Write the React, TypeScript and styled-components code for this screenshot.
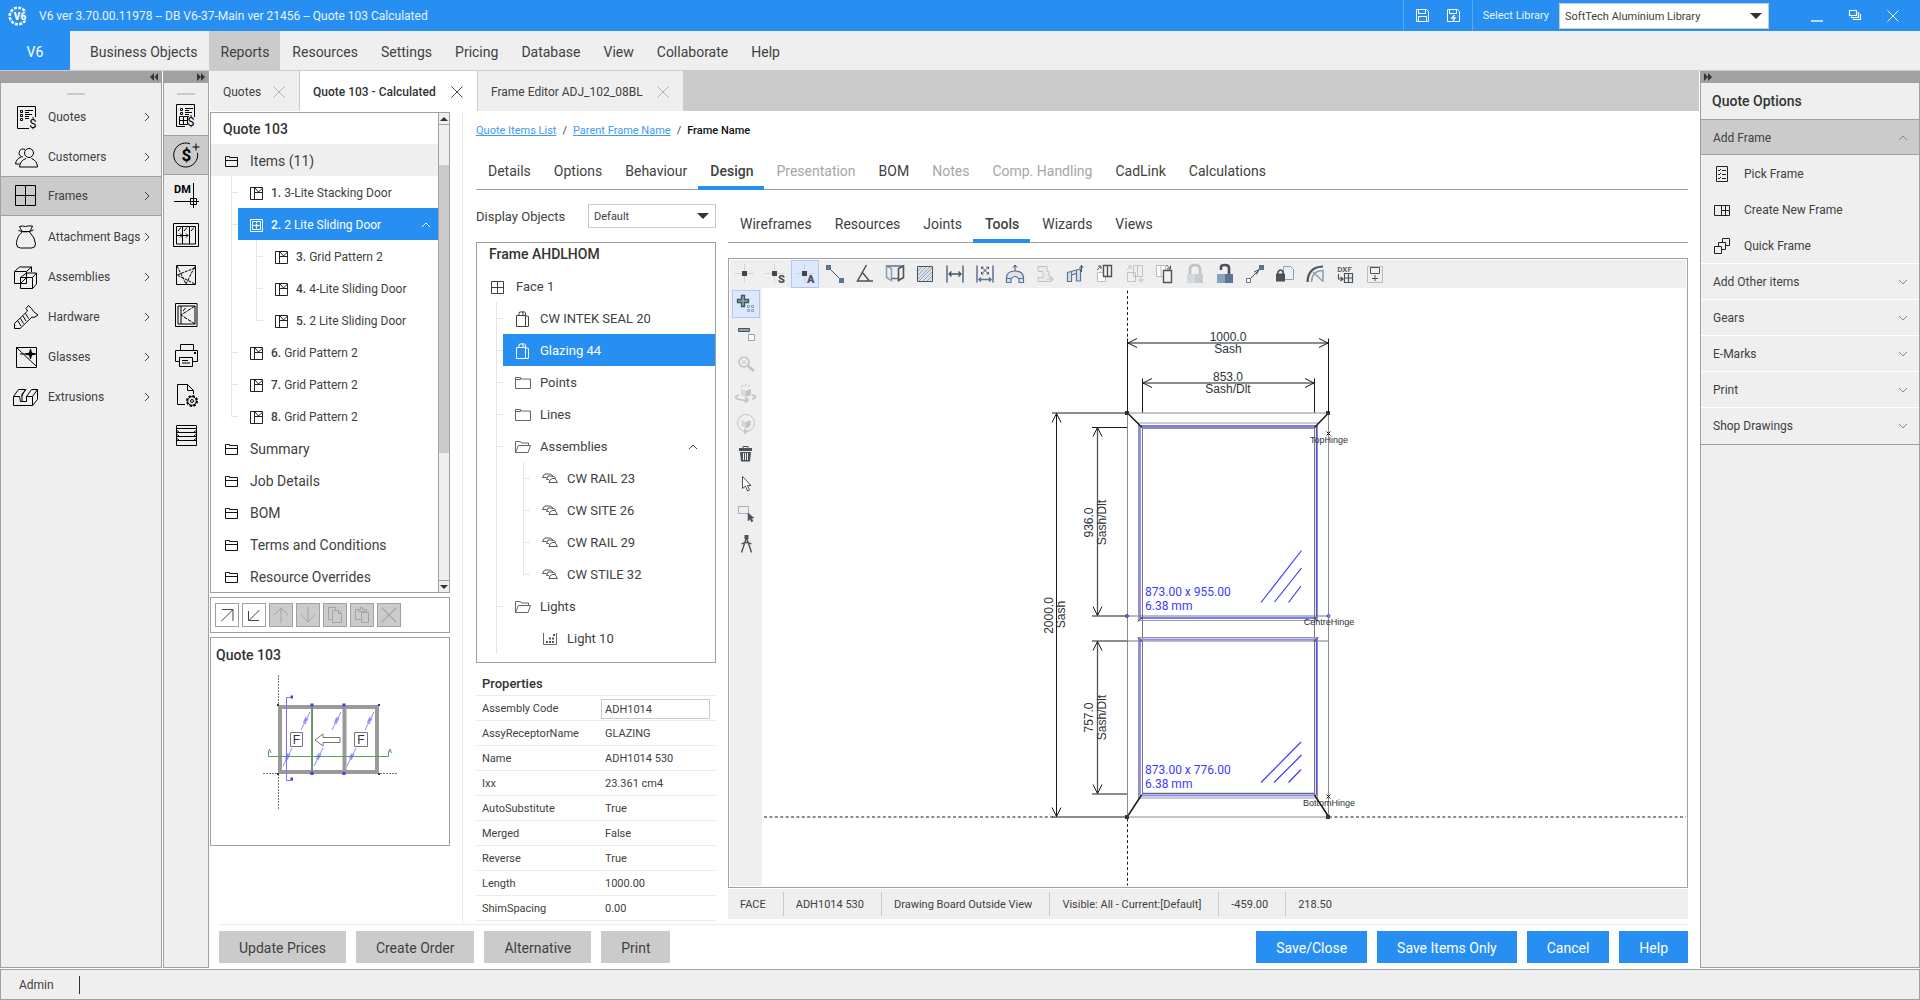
import React from "react";
import styled, { createGlobalStyle, css } from "styled-components";

const c = {
  blue: "#278ff1",
  bar: "#efefef",
  mid: "#cbcbcb",
  line: "#a1a1a1",
  soft: "#ececec",
  text: "#414141",
  dim: "#a6a6a6",
  slate: "#4a525c",
  steel: "#5b7495",
  mist: "#8ba3b8",
};

const Global = createGlobalStyle`
  *, *::before, *::after { box-sizing: border-box; }
  html, body, #root { height: 100%; }
  body {
    margin: 0;
    background: #fff;
    color: ${c.text};
    font-family: Roboto, "Noto Sans", sans-serif;
    font-size: 12px;
    line-height: 16px;
  }
  button, input, select { font: inherit; color: inherit; }
  button { border: 0; padding: 0; background: none; text-align: left; }
  ul { list-style: none; margin: 0; padding: 0; }
  h2, h3 { margin: 0; font-size: 14px; font-weight: 500; color: #333; }
  svg { display: block; flex: none; }
`;

const Shell = styled.div`
  display: flex;
  flex-direction: column;
  min-height: 100vh;
  min-width: 1500px;
`;

/* ---------- icons ---------- */

const Glyph = styled.svg<{ $size?: number }>`
  width: ${(p) => p.$size ?? 24}px;
  height: ${(p) => p.$size ?? 24}px;
  fill: none;
  stroke: currentColor;
  overflow: visible;
  text {
    stroke: none;
    fill: currentColor;
    font-family: Roboto, sans-serif;
  }
`;

const G = ({ size = 24, box, children }: { size?: number; box?: number; children: React.ReactNode }) => (
  <Glyph $size={size} viewBox={`0 0 ${box ?? size} ${box ?? size}`} aria-hidden="true">
    {children}
  </Glyph>
);

const Cross = ({ size = 12 }: { size?: number }) => (
  <G size={size} box={12}>
    <path d="M.5.5l11 11M11.5.5l-11 11" strokeWidth=".9" />
  </G>
);
const Chev = ({ dir }: { dir: "up" | "down" | "right" }) => (
  <G size={8}>
    <path
      d={dir === "up" ? "M0 6l4-4 4 4" : dir === "down" ? "M0 2l4 4 4-4" : "M2 0l4 4-4 4"}
      strokeWidth="1"
    />
  </G>
);
const Twin = ({ left }: { left?: boolean }) => (
  <G size={8}>
    <path fill="#333" stroke="none" d={left ? "M4 0v8L0 4zM8 0v8L4.5 4z" : "M0 0v8l4-4zM4 0v8l4-4z"} />
  </G>
);
const Caret = () => (
  <svg width={12} height={6} viewBox="0 0 12 6" aria-hidden="true">
    <path d="M0 0h12L6 6z" fill="#333" />
  </svg>
);
const Folder = () => (
  <G size={13}>
    <path stroke="#111" d="M.5 11.5v-10h4v1h8v9zM.5 5.5h12" />
  </G>
);
const FolderWide = ({ open }: { open?: boolean }) => (
  <G size={16}>
    <path
      stroke="#666"
      d={open ? "M.5 13.5v-11h5l1 1.5h7v2.5M.5 13.5l3-7h12l-2.5 7z" : "M.5 2.5h5V4h10v9.500H.5zM.5 4.500h5"}
    />
  </G>
);
const Grid4 = () => (
  <G size={13}>
    <path d="M.5.5h12v12H.5zM6.5.5v12M.5 6.5h12" />
  </G>
);
const DoorIcon = () => (
  <G size={13}>
    <path stroke="#222" d="M.5.5h12v12H.5zM4.5.5v12M4.5 5.5h8M5 1l3.5 4L12.5 1" />
  </G>
);
const LiteIcon = () => (
  <G size={13}>
    <path d="M.5.5h12v12H.5zM2.5 2.5h8v8h-8z" />
    <path d="M6.5 3v7M3 6.5h7" strokeDasharray="1.5 1" />
    <circle cx="6.5" cy="6.5" r="1" />
  </G>
);
const BagIcon = () => (
  <G size={16}>
    <path d="M1.500 4.500h9v11h-9zM10.500 4.500l3 1v10h-3M4 4.500V1.500q2-1.500 4 0v3M7 1q3-1 3.500 1v2.500" />
  </G>
);
const RailIcon = () => (
  <G size={16}>
    <path
      stroke="#555"
      d="M.5 6.500l2-3.500h6l2 2v1M.5 6.500h4M4.500 8.500l1.500-3.500h5l3 2M4.500 8.500H7M7 11.500l1-2.500 2-1.500h3l2.500 4z"
    />
  </G>
);
const LightIcon = () => (
  <G size={16}>
    <path d="M1.500 2v11.500h13V2" stroke="#666" />
    <path
      d="M4 10h2v2H4zM7 10h2v2H7zM10 10h2v2h-2zM7 6.500h2v2H7zM10 6.500h2v2h-2zM11 3h2v2h-2z"
      fill="#555"
      stroke="none"
    />
  </G>
);

const Dollar = ({ x, y, s = 12 }: { x: number; y: number; s?: number }) => (
  <text x={x} y={y} fontSize={s} textAnchor="middle">
    $
  </text>
);

const ListLines = () => (
  <path d="M6.500 5.500h2v2h-2zM6.500 9.500h2v2h-2zM6.500 13.500h2v2h-2zM11 5.500h8M11 7.500h4M11 9.500h7M11 11.500h4M11 13.500h4" />
);

const nav: [string, React.ReactNode][] = [
  ["Quotes", <><path d="M15 23.500H3.500v-22h18V12" /><ListLines /><Dollar x={19} y={23} s={13} /></>],
  ["Customers", <><circle cx="15" cy="8" r="4.500" /><path d="M12 13.500q-6 2-6.500 8.500h18q-.5-6.500-6-8.500M11 4.500a4 4 0 1 0-2 7.500M5.500 19H1.500q.5-5 5.500-7" /></>],
  ["Frames", <path d="M1.500 1.500h20v20h-20zM11.500 1.500v20M1.500 11.500h20" />],
  ["Attachment Bags", <path d="M8.500 6.500C6 4 6 2 5.500 1.500q3-1 6 0 3-1 7-.5-1 3-3 5.500zM4.500 5.500q8 3 15-.5M8.500 7C4 10 2.500 15 2.500 19q0 4 4 4h11q4 0 4-4 0-6-6-12" />],
  ["Assemblies", <path d="M.5 6.500h12v12H.5zM.5 6.500l5-4.500h12v5M12.500 6.500l5-4.500M6.500 12.500h12v11h-12zM18.500 12.500l4-4.500v11l-4 4.500M12.500 8h10M6.500 12.500l6-4.500M7 18l5-5" />],
  ["Hardware", <path d="M.5 18.500L13.500 6 12 3.500 14.500.5l3 3 2 3 4.500 3.500-4 2.500-2-.5L6 23.500H.5zM4 16l3 5M6.500 13.500l3 5M9 11l3 5M11.500 8.500l3 5" />],
  ["Glasses", <><path d="M2.500 2.500h20v20h-20zM2.500 2.500l20 19" /><path d="M16.500 4l1 4 4 1-4 1-1 4-1-4-4-1 4-1z" fill="currentColor" /><path d="M6 9h16" /></>],
  ["Extrusions", <path d="M-.5 11.500h6l1 5h6v-5h6v9H-.500zM-.5 11.500l5-7h7l-4 7M18.500 20.500l5-6v-10h-6l-5 7M18.500 11.500l5-7M8 16V9l4-4.500" />],
];

const quick: [string, React.ReactNode][] = [
  ["Quote pricing", <><path d="M11 23.500H2.500v-22h18V14" /><ListLines /><path d="M5.500 13.500h8v8h-8zM9.500 13.500v8M5.500 17.500h8" fill="#efefef" /><Dollar x={17} y={23} s={13} /></>],
  ["Add price", <><path d="M16 .8a12 12 0 1 0 7.500 9M22 .500v7M18.500 4h7" /><text x="12.500" y="18" fontSize="17" fontWeight="700" textAnchor="middle">$</text></>],
  ["Drawing manager", <><text x="0" y="10" fontSize="11" fontWeight="700">DM</text><path d="M0 18.500h25M19.500 0v25M16.500 15.500h6v6h-6z" /></>],
  ["Sashes", <path d="M-.5.5h25v23h-25zM2.500 3.500h19v17.500h-19zM8.500 3.500V21M15.500 3.500V21M4 8l3-3.500M10 8l3-3.500M17 8l3-3.500M3 12.500h5m-2-2l2 2-2 2M9 12.500h5m-2-2l2 2-2 2" />],
  ["Openings", <><path d="M2.500 2.500h19v19h-19z" /><path d="M3 3l9 18 9-18M21 5L3 12l18 9" strokeDasharray="3 1" /></>],
  ["Hinged window", <><path d="M1.500.5h21.500v23h-21.500zM4 3h17v18H4zM7 3v18" /><path d="M21 3L7 12l14 9M9 8l3-3.500" strokeDasharray="4 1" /></>],
  ["Printer", <><path d="M6.500 7V1.500h13V7M5 18.500H1.500v-11h22v11H18M5.500 14.500h13v9h-13zM8 17.500h6M8 20h8" /><path d="M20 10h2" strokeWidth="2" /></>],
  ["Document settings", <><path d="M11 21.500H3.500v-20h10l6 6V11M13.500 1.500v6h6" /><circle cx="18" cy="18" r="5" strokeWidth="2" strokeDasharray="2.300 1.600" /><circle cx="18" cy="18" r="4.300" /><circle cx="18" cy="18" r="1.500" /></>],
  ["Louvres", <path d="M2.500 2.500h20v20h-20zM2.500 5.500h20M2.500 9.500h20M2.500 13.500h20M2.500 17.500h20M2.500 7l3 2.500M2.500 11l3 2.500M2.500 15l3 2.500M22.500 7l-3 2.500M22.500 11l-3 2.500M22.500 15l-3 2.500" />],
];

/* ---------- title bar ---------- */

const TitleBar = styled.header`
  display: flex;
  align-items: center;
  height: 31px;
  padding: 0 20px 0 8px;
  background: ${c.blue};
  color: #fff;
  font-size: 12px;
`;
const TitleText = styled.span`
  flex: 1;
  padding-left: 11px;
  white-space: nowrap;
  color: #e9f4ff;
`;
const TitleSaves = styled.div`
  display: flex;
  align-items: center;
  justify-content: center;
  gap: 18px;
  width: 70px;
  height: 31px;
  border: solid #5aaaf5;
  border-width: 0 1px;
`;
const IconButton = styled.button`
  display: flex;
`;
const SelectLabel = styled.label`
  padding: 1px 10px 0;
  font-size: 11px;
  color: #e9f4ff;
`;
const PickWrap = styled.div<{ $w: number; $h: number }>`
  display: grid;
  align-items: center;
  width: ${(p) => p.$w}px;
  height: ${(p) => p.$h}px;
  > * {
    grid-area: 1 / 1;
  }
  > svg {
    justify-self: end;
    margin-right: 7px;
    pointer-events: none;
  }
`;
const Pick = styled.select`
  width: 100%;
  height: 100%;
  padding: 2px 5px 0;
  appearance: none;
  border: 1px solid ${c.mid};
  border-radius: 0;
  background: #fff;
  color: ${c.text};
  font-size: 11px;
`;
const WindowButtons = styled.div`
  display: flex;
  align-items: center;
  gap: 25px;
  margin-left: 42px;
  button {
    width: 13px;
  }
`;

const Floppy = ({ bolt }: { bolt?: boolean }) => (
  <G size={13}>
    <path d="M.5.5h10l2 2v10H.5zM2.500.5v4h7v-4" />
    {bolt ? <path d="M7.500 6L5 9h3l-2 3" strokeWidth="1.300" /> : <path d="M2.500 12V7.500h8V12" />}
  </G>
);

const Logo = () => (
  <svg width="20" height="20" viewBox="0 0 20 20" aria-hidden="true">
    <circle cx="10" cy="10" r="8.300" fill="none" stroke="#fff" strokeWidth="2.600" strokeDasharray="3 1.340" />
    <rect x="5" y="6" width="15" height="8.500" fill={c.blue} />
    <text x="12" y="13.500" fontSize="10" fontWeight="900" textAnchor="middle" fill="#fff" fontFamily="Roboto, sans-serif">
      V6
    </text>
  </svg>
);

/* ---------- menu ---------- */

const MenuBar = styled.nav`
  display: flex;
  height: 40px;
  background: ${c.bar};
  border-bottom: 1px solid ${c.mid};
  font-size: 14px;
`;
const Brand = styled.button`
  width: 70px;
  margin-right: 8px;
  padding-top: 2px;
  background: ${c.blue};
  color: #fff;
  text-align: center;
`;
const MenuItem = styled.button<{ $on?: boolean }>`
  padding: 2px 11px 0 12px;
  background: ${(p) => (p.$on ? c.mid : "transparent")};
`;

/* ---------- side rails ---------- */

const Body = styled.div`
  display: flex;
  flex: 1;
  gap: 1px;
  padding-bottom: 1px;
`;
const Rail = styled.aside<{ $w: number }>`
  flex: none;
  width: ${(p) => p.$w}px;
  background: ${c.bar};
  border: 1px solid ${c.line};
  border-top: 0;
`;
const RailHead = styled.div<{ $end?: boolean }>`
  display: flex;
  align-items: center;
  justify-content: ${(p) => (p.$end ? "flex-end" : "flex-start")};
  height: 12px;
  padding: 0 3px;
  background: ${c.line};
`;
const Grip = styled.div<{ $pad?: number }>`
  height: 12px;
  padding-right: ${(p) => p.$pad ?? 0}px;
  &::before {
    content: "";
    display: block;
    width: 18px;
    height: 12px;
    margin: auto;
    border-bottom: 2px solid ${c.mid};
  }
`;
const railRow = css<{ $on?: boolean }>`
  display: flex;
  align-items: center;
  width: 100%;
  height: 40px;
  border: solid transparent;
  border-width: 1px 0;
  ${(p) => p.$on && `background: ${c.mid}; border-color: ${c.line};`}
`;
const NavItem = styled.button<{ $on?: boolean }>`
  ${railRow}
  padding: 0 10px 0 13px;
  ${(p) => p.$on && "margin: -1px 0 1px;"}
  svg:first-child {
    color: #000;
  }
  span {
    flex: 1;
    padding-left: 10px;
    white-space: nowrap;
  }
`;
const NavList = styled.div<{ $gap: number }>`
  padding-top: ${(p) => p.$gap}px;
`;
const QuickItem = styled.button<{ $on?: boolean }>`
  ${railRow}
  justify-content: center;
  color: #000;
`;

/* ---------- main ---------- */

const Main = styled.main`
  display: flex;
  flex: 1;
  flex-direction: column;
  min-width: 0;
`;
const DocTabs = styled.div`
  display: flex;
  height: 40px;
  background: ${c.mid};
`;
const DocTab = styled.div<{ $on?: boolean; $w: number }>`
  display: flex;
  align-items: center;
  justify-content: space-between;
  width: ${(p) => p.$w}px;
  padding: 2px 14px 0 13px;
  border-right: 1px solid ${c.mid};
  background: ${(p) => (p.$on ? "#fff" : c.bar)};
  font-weight: ${(p) => (p.$on ? 500 : 400)};
  color: ${(p) => (p.$on ? "#333" : c.text)};
  white-space: nowrap;
  ${IconButton} {
    color: ${(p) => (p.$on ? "#333" : "#aaa")};
  }
`;
const Work = styled.div`
  display: flex;
  flex: 1;
  padding-top: 1px;
`;
const LeftCol = styled.section`
  display: flex;
  flex: none;
  flex-direction: column;
  gap: 4px;
  width: 252px;
  padding-right: 12px;
`;
const Box = styled.div`
  border: 1px solid ${c.line};
`;
const ListBox = styled(Box)`
  --step: 20px;
  --step-in: 18px;
  --end: 8px;
  display: flex;
  ul {
    flex: 1;
  }
`;
const PanelTitle = styled.h2`
  padding: 8px 12px 7px;
`;
const Bar = styled.div`
  display: flex;
  flex-direction: column;
  width: 11px;
  border-left: 1px solid ${c.line};
  background: ${c.bar};
`;
const BarButton = styled.button`
  display: flex;
  align-items: center;
  justify-content: center;
  height: 12px;
  background: ${c.bar};
  border: solid ${c.line};
  border-width: 0 0 1px;
  &:last-child {
    border-width: 1px 0 0;
  }
`;
const Thumb = styled.div`
  flex: 288;
  background: ${c.mid};
`;
const Track = styled.div<{ $n: number }>`
  flex: ${(p) => p.$n};
`;

type Guide = "line" | "tick" | "last" | "none";
const TreeRow = styled.li<{ $shade?: boolean }>`
  display: flex;
  height: 32px;
  background: ${(p) => (p.$shade ? c.bar : "transparent")};
`;
const GuideCell = styled.span<{ $kind: Guide }>`
  width: 7px;
  margin-left: var(--step);
  background-repeat: no-repeat;
  background-image: ${(p) => (p.$kind === "none" ? "none" : "linear-gradient(#e6e6e6, #e6e6e6), linear-gradient(#e6e6e6, #e6e6e6)")};
  background-position: 0 0, 0 50%;
  background-size: 1px ${(p) => (p.$kind === "last" ? "50%" : "100%")},
    ${(p) => (p.$kind === "line" ? "0" : "100%")} 1px;
  & + & {
    margin-left: var(--step-in);
  }
`;
const TreeButton = styled.button<{ $on?: boolean; $gap: number; $size: number; $root: boolean }>`
  display: flex;
  flex: 1;
  align-items: center;
  gap: ${(p) => p.$gap}px;
  padding: 2px var(--end) 0 ${(p) => (p.$root ? 14 : 12)}px;
  font-size: ${(p) => p.$size}px;
  color: ${(p) => (p.$on ? "#fff" : c.text)};
  background: ${(p) => (p.$on ? c.blue : "transparent")};
  white-space: nowrap;
  b {
    font-weight: 500;
  }
  span {
    flex: 1;
  }
`;
type TreeProps = {
  icon: React.ReactNode;
  label: string;
  no?: number;
  guides?: Guide[];
  on?: boolean;
  shade?: boolean;
  open?: boolean;
  gap?: number;
  size?: number;
};
const Tree = ({ icon, label, no, guides = [], on, shade, open, gap = 12, size = 14 }: TreeProps) => (
  <TreeRow $shade={shade}>
    {guides.map((g, i) => (
      <GuideCell key={i} $kind={g} />
    ))}
    <TreeButton type="button" $on={on} $gap={gap} $size={size} $root={guides.length === 0}>
      {icon}
      <span>
        {no && <b>{no}.</b>} {label}
      </span>
      {open && <Chev dir="up" />}
    </TreeButton>
  </TreeRow>
);

const MiniBar = styled(Box)`
  display: flex;
  gap: 3px;
  padding: 5px 4px;
`;
const MiniButton = styled.button`
  display: flex;
  align-items: center;
  justify-content: center;
  width: 24px;
  height: 24px;
  border: 1px solid ${c.line};
  color: #444;
  &:disabled {
    background: ${c.mid};
    color: #a3a3a3;
  }
`;
const Preview = styled(Box)`
  h3 {
    padding: 9px 5px 7px;
  }
  svg {
    width: 100%;
    height: 175px;
  }
`;

const Editor = styled.section`
  display: flex;
  flex: 1;
  flex-direction: column;
  min-width: 0;
  padding: 0 11px 0 13px;
  border-left: 1px solid ${c.soft};
`;
const Crumbs = styled.nav`
  display: flex;
  gap: 6px;
  height: 38px;
  align-items: center;
  font-size: 11px;
  a {
    color: #3d9bf3;
  }
  b {
    font-weight: 500;
    color: #111;
  }
`;
const TabRow = styled.div<{ $h: number }>`
  display: flex;
  height: ${(p) => p.$h}px;
  border-bottom: 1px solid ${c.line};
`;
const Tab = styled.button<{ $on?: boolean }>`
  height: 40px;
  padding: 5px 11px 0 12px;
  align-self: flex-end;
  margin-bottom: -1px;
  font-size: 14px;
  white-space: nowrap;
  border-bottom: 4px solid ${(p) => (p.$on ? c.blue : "transparent")};
  font-weight: ${(p) => (p.$on ? 500 : 400)};
  &:disabled {
    color: ${c.dim};
  }
`;
const Columns = styled.div`
  display: flex;
  flex: 1;
  gap: 12px;
`;
const FrameCol = styled.div`
  flex: none;
  width: 240px;
`;
const ObjectsRow = styled.div`
  display: flex;
  align-items: center;
  justify-content: space-between;
  height: 52px;
  font-size: 13px;
  label {
    padding-top: 2px;
  }
`;
const FrameBox = styled(Box)`
  --step: 19px;
  --step-in: 20px;
  --end: 18px;
  padding-bottom: 8px;
  h3 {
    padding: 3px 12px 8px;
  }
`;
const PropTitle = styled.h3`
  padding: 13px 6px 3px;
  font-size: 13px;
`;
const PropTable = styled.table`
  width: 100%;
  border-collapse: collapse;
  table-layout: fixed;
  font-size: 11px;
  tr {
    height: 25px;
    border-top: 1px solid ${c.soft};
    border-bottom: 1px solid ${c.soft};
  }
  th {
    width: 125px;
    padding: 1px 6px 0;
    font-weight: 400;
    text-align: left;
  }
  td {
    padding: 1px 6px 0 4px;
  }
`;
const CodeInput = styled.input`
  display: block;
  width: 109px;
  height: 20px;
  margin-left: -4px;
  padding: 1px 3px 0;
  border: 1px solid ${c.mid};
`;

const DrawCol = styled.div`
  display: flex;
  flex: 1;
  flex-direction: column;
  min-width: 0;
`;
const Board = styled(Box)`
  display: grid;
  flex: 1;
  grid-template: 28px 1fr / 32px 1fr;
  margin-top: 15px;
  padding: 1px;
`;
const ToolBar = styled.div<{ $side?: boolean }>`
  display: flex;
  flex-direction: ${(p) => (p.$side ? "column" : "row")};
  grid-column: ${(p) => (p.$side ? "1" : "1 / 3")};
  gap: 2px;
  padding: ${(p) => (p.$side ? "2px" : "0 1px")};
  background: ${c.bar};
`;
const Tool = styled.button<{ $on?: boolean }>`
  flex: none;
  width: 28px;
  height: 28px;
  color: ${c.slate};
  box-shadow: ${(p) => (p.$on ? "inset 0 0 0 1px #b9c3f7" : "none")};
  background: ${(p) => (p.$on ? "#dce8fb" : "transparent")};
  &:disabled {
    opacity: 0.28;
  }
`;
const Sheet = styled.div`
  display: flex;
  min-height: 597px;
  svg {
    width: 100%;
    height: 100%;
  }
`;
const StateBar = styled.div`
  display: flex;
  align-items: center;
  height: 30px;
  margin-top: 1px;
  margin-bottom: 5px;
  background: ${c.bar};
  font-size: 11px;
  span {
    height: 24px;
    padding: 5px 17px 0 12px;
    border-right: 1px solid ${c.mid};
  }
  span:last-child {
    border: 0;
  }
`;
const Footer = styled.footer`
  display: flex;
  gap: 10px;
  margin: 0 11px 0 9px;
  padding: 6px 0 5px;
  border-top: 1px solid ${c.soft};
`;
const Action = styled.button<{ $main?: boolean }>`
  height: 32px;
  padding: 2px 20px 0;
  font-size: 14px;
  background: ${(p) => (p.$main ? c.blue : c.mid)};
  color: ${(p) => (p.$main ? "#fff" : c.text)};
`;
const Spacer = styled.span`
  flex: 1;
`;

/* ---------- options ---------- */

const OptionTitle = styled.h2`
  padding: 10px 11px;
  border-bottom: 1px solid ${c.line};
`;
const OptionHead = styled.button<{ $on?: boolean }>`
  display: flex;
  align-items: center;
  justify-content: space-between;
  width: 100%;
  height: 36px;
  padding: 1px 12px 0;
  border-top: 1px solid #fff;
  ${(p) => p.$on && `height: 35px; padding-top: 2px; background: ${c.mid}; border-top: 0; border-bottom: 1px solid ${c.line};`}
  svg {
    color: #888;
  }
`;
const OptionItem = styled.button`
  display: flex;
  align-items: center;
  gap: 14px;
  width: 100%;
  height: 36px;
  padding: 2px 13px 0;
  svg {
    color: #222;
  }
`;
const Options = styled.div`
  padding-bottom: 1px;
  border-bottom: 1px solid ${c.line};
`;
const AppStatus = styled.div`
  display: flex;
  align-items: center;
  height: 31px;
  padding-left: 18px;
  background: ${c.bar};
  border: 1px solid ${c.line};
  span {
    width: 61px;
    height: 18px;
    padding-top: 1px;
    border-right: 1px solid #333;
  }
`;

/* ---------- tool icons, drawn on a 28px button ---------- */

const Plus0 = () => (
  <>
    <path d="M4 13.500h19M13.500 4v19" stroke="#d4d4d4" />
    <path d="M11 11h5v5h-5z" fill="#3e4650" stroke="none" />
  </>
);
const Lock = ({ open }: { open?: boolean }) => (
  <>
    <path d={open ? "M10 10V7q0-2 4-2t4 3v6" : "M9 14V9q0-4 5-4t5 4v5"} strokeWidth="2.600" />
    <path d="M6 14h8v9H6z" fill={c.mist} stroke="none" />
    <path d="M14 14h8v9h-8z" fill={c.steel} stroke="none" />
  </>
);

const tools: [string, React.ReactNode, boolean?][] = [
  ["Point", <Plus0 />],
  ["Snap point", <><Plus0 /><text x="17" y="23" fontSize="11" fontWeight="900">S</text></>],
  ["Auto point", <><Plus0 /><text x="16" y="23" fontSize="11" fontWeight="900">A</text></>],
  ["Line", <><path d="M8 8l12 12" /><path d="M5 5h5v5H5zM18 18h5v5h-5z" fill={c.steel} stroke="none" /></>],
  ["Angle", <path d="M15.500 5L6.500 21H22M11 12l7 8.500" strokeWidth="1.500" />],
  ["Opening", <><path d="M5.500 6l5 2.500v12l-5-3z" stroke={c.mist} strokeWidth="1.600" /><path d="M5.500 6h17M10.500 18.500h7" stroke={c.steel} strokeWidth="1.400" /><path d="M22.500 6l-5 2.500v12l5-3z" strokeWidth="1.600" /></>],
  ["Hatch", <><path d="M6.500 6.500h15v15h-15z" fill="#dbe2e9" /><path d="M7 11l4-4M7 15l8-8M7 19L19 7M8 21L21 8M12 21l9-9M16 21l5-5" stroke={c.mist} strokeWidth=".9" /></>],
  ["Dimension", <><path d="M6 5.500v17M22 5.500v17" stroke={c.steel} strokeWidth="1.600" /><path d="M8 14h12M10.500 11.500L8 14l2.500 2.500M17.500 11.500L20 14l-2.500 2.500" strokeWidth="1.300" /></>],
  ["Fit dimension", <><path d="M6 5.500v17M22 5.500v17M8 19.500h12M10 17.500l-2 2 2 2M18 17.500l2 2-2 2" stroke={c.steel} strokeWidth="1.500" /><path d="M10.500 7l7 7M17.500 7l-7 7M10.500 9V7h2M15.500 7h2v2M10.500 12v2h2M15.500 14h2v-2" /></>],
  ["Arch", <><path d="M5.500 22.500V18q0-7 8.500-7t8.500 7v4.500h-4.500V19q-4-5-8 0v3.500zM5.500 18.500h4.500M18 18.500h4.500" stroke={c.steel} fill="#dbe2e9" strokeWidth="1.200" /><path d="M14 11V5M12 7.500L14 5l2 2.500" /></>],
  ["Profile", <path d="M7 6.500h9v5h2v5h2v5H7v-4h5v-6H7zM16 19h6M20 17l2.500 2-2.500 2" fill="#ddd" />, true],
  ["Raise", <><path d="M6.500 12.500l13-3.500v12h-4v-7.500l-5 1.500v6.500h-4z" stroke={c.steel} strokeWidth="1.200" fill="#dbe2e9" /><path d="M10.500 14.500v-3M15.500 13v-3" stroke={c.steel} /><path d="M20.500 12V5M18.500 8l2-2.500 2 2.500" /></>],
  ["Copy up", <><path d="M6.500 12.500h8v9h-8z" stroke="#bbb" fill="#fff" /><path d="M12.500 5.500h8v11h-8zM16.500 5.500v11" fill="#f2f2f2" strokeWidth="1.400" /><path d="M6 10l4-4M7 6h3v3" /></>],
  ["Copy add", <><path d="M6.500 12.500h8v9h-8zM12.500 5.500h9v11h-9zM16.500 5.500v11M6 10l4-4M7 6h3v3M20 17v6M17 20h6" /></>, true],
  ["Copy down", <><path d="M5.500 5.500h9v11h-9zM10 5.500v11" stroke="#bbb" fill="#fff" /><path d="M12.500 10.500h8v12h-8z" fill="#f2f2f2" strokeWidth="1.400" /><path d="M15.500 5l4 4M19.500 5.500V9H16" /></>],
  ["Locked", <Lock />, true],
  ["Unlock", <Lock open />],
  ["Connector", <><path d="M8 20L19 9M13 12l5-2.500-2.500 5" /><path d="M5.500 18.500h4v4h-4z" stroke={c.steel} fill="#fff" /><path d="M18 5h5v5h-5z" fill={c.steel} stroke="none" /></>],
  ["Locked document", <><path d="M12.500 6.500h7l3 3v10h-10z" stroke={c.mist} fill="#eef2f6" /><path d="M7 14v-2q2.500-4 5 0v2" strokeWidth="1.600" /><path d="M5 13.500h9v8H5z" fill={c.slate} stroke="none" /></>],
  ["Curve", <><path d="M6.500 22Q7 7 22 6.500" strokeWidth="2.200" /><path d="M10.500 22Q11 10.500 22 10.500v11M12 12l10 9.500" stroke={c.mist} strokeWidth="1.600" /></>],
  ["Export", <><text x="13.500" y="11.500" fontSize="8" fontWeight="500" textAnchor="middle">DXF</text><path d="M7.500 14v5h4M9.500 17l2.500 2-2.500 2M13.500 13.500h8v9h-8zM17.500 13.500v9M13.500 18h8" strokeWidth="1.200" /></>],
  ["Callout", <><path d="M6.500 6.500h15v16h-15z" stroke="#bbb" /><path d="M9.500 7.500h9v6h-9zM14 15v6M11 18.500h6" /></>],
];

const sideTools: [string, React.ReactNode, boolean?][] = [
  ["Add", <><path d="M9.500 5.500h3v4h4v3h-4v4h-3v-4h-4v-3h4z" fill={c.mist} strokeWidth="1.300" /><path d="M15.500 15.500h2v2h-2zM19.500 15.500h2v2h-2zM15.500 19.500h2v2h-2zM19.500 19.500h2v2h-2z" stroke={c.mist} /></>],
  ["Remove", <><path d="M6.500 8.500h11v3h-11z" fill={c.mist} /><path d="M16.500 14.500h6v6h-6z" fill="#fff" stroke={c.mist} /></>],
  ["Zoom reset", <><circle cx="12" cy="12" r="5" strokeWidth="1.600" /><path d="M16 16l6 5" strokeWidth="2.600" /><path d="M9.500 9.500l5 5M14.500 9.500l-5 5" stroke={c.steel} /></>, true],
  ["Orbit", <><path d="M9 9l5 2v6l-5-2z" fill={c.mist} stroke="none" /><path d="M19 9l-5 2v6l5-2z" fill={c.slate} stroke="none" /><path d="M10 7l1-2M13 6.500L14 4M16 7l2-2" /><path d="M7 15q-6 2-1 4 6 2 9 1M20 15q7 2 0 4M13 17.500l3 2.500-3 2.500" strokeWidth="1.700" /></>, true],
  ["Rotate", <><circle cx="14" cy="13" r="8.500" /><path d="M9.500 10l4.500 2v6.500L9.500 16z" fill={c.mist} stroke="none" /><path d="M18.500 10L14 12v6.500l4.500-2.500z" fill={c.slate} stroke="none" /><path d="M12 19.500l3 2-3 2" strokeWidth="1.600" /></>, true],
  ["Delete", <><path d="M7 8h13v3H7zM8 12h11l-1 9.500H9z" fill={c.slate} stroke="none" /><path d="M11 8V6.500h5V8" /><path d="M11.500 13v7M13.500 13v7M15.500 13v7" stroke="#efefef" /></>],
  ["Pointer", <path d="M10.500 6.500v12l3-2.500 2 5 2-1-2-4.500h3.500z" fill="#fff" />],
  ["Marquee", <><path d="M6.500 6.500h10v7h-10z" stroke={c.steel} strokeDasharray="1 1" /><path d="M16 13v8l2-2 1.500 3 1.500-1-1.500-3h2.500z" fill={c.slate} strokeWidth=".5" /></>],
  ["Compass", <><path d="M12.500 5h4v4h-4z" fill={c.slate} stroke="none" /><path d="M14 9L9.500 22.500M15 9l4.500 13.500M9.500 14q5-3 10 0" strokeWidth="1.400" /></>],
];

/* ---------- drawings ---------- */

const Cad = styled.svg`
  font-family: "Liberation Sans", Arial, sans-serif;
  fill: none;
  stroke: #1a1a1a;
  text {
    stroke: none;
    fill: #2d3338;
    font-size: 12px;
    text-anchor: middle;
  }
  .hinge {
    font-size: 9px;
  }
  .glass {
    fill: #3b3bfb;
    text-anchor: start;
    font-family: Roboto, sans-serif;
  }
`;

const DoorDrawing = () => (
  <Cad viewBox="762 288 924 597" role="img" aria-label="Sash elevation">
    <path d="M1127.500 290v48M1127.500 818v67M764 816.500h289M1329 816.500h357" strokeDasharray="3 2.400" />
    <g stroke="#8c8c8c">
      <path d="M1127.500 412.500h201v404h-201z" />
      <path d="M1127 615.500h201M1127 640.500h201M1142.500 427v368M1314.500 427v368" stroke="#777" />
      <path d="M1138.500 422.500h179v197.500h-179zM1138.500 637h179v160.500h-179z" stroke="#9a9a9a" />
      <path d="M1142.500 427.500h172M1142.500 793h172" strokeWidth="1.500" stroke="#6e6e6e" />
    </g>
    <g stroke="#5050ff" strokeWidth="1.300">
      <path d="M1140 617.500V425.500h176.500v192zM1140 639v156M1316.500 639v156" />
      <path d="M1140 639h176M1140 795h176" stroke="#918ff8" strokeWidth="2" />
    </g>
    <path d="M1127.500 412.500l14.500 14.500M1328.500 412.500l-14 14.500M1127.500 816l14-21.500M1328.500 816l-14-21.500" strokeWidth="1.500" />
    <path d="M1138 621l4-4M1318 621l-4-4M1138 637l4 4M1318 637l-4 4" />
    <g fill="#333c45" stroke="none">
      <path d="M1125 410.500h4v4h-4zM1326 410.500h4v4h-4zM1125 814.500h4v4h-4zM1326 814.500h4v4h-4z" />
    </g>
    <circle cx="1127" cy="615.500" r="1.500" stroke="#3b3bfb" />
    <circle cx="1328.500" cy="615.500" r="1.500" stroke="#3b3bfb" />
    <path d="M1326.500 431l4 4M1330.500 431l-4 4M1326.500 794l4 4M1330.500 794l-4 4" />
    <path d="M1127.500 338v75M1328.500 338v75M1127.500 342.500h201M1142.500 378v34M1314.500 378v34M1142.500 382.500h172" />
    <path d="M1137 338l-9 4.500 9 4.500M1319 338l9 4.500-9 4.500M1152 378l-9 4.500 9 4.500M1305 378l9 4.500-9 4.500" />
    <path d="M1052 412.500h75M1052 816.500h75M1056.500 412.500v404M1052 422l4.500-9 4.500 9M1052 807l4.500 9 4.500-9" />
    <path d="M1092 427h35M1092 615.500h35M1092 640.500h35M1092 793.500h35" />
    <path d="M1097.500 427v188M1097.500 641v152" stroke="#555" strokeWidth="1.300" />
    <path d="M1093 436l4.500-9 4.500 9M1093 606l4.500 9 4.500-9M1093 650l4.500-9 4.500 9M1093 784l4.500 9 4.500-9" />
    <text x="1228" y="340">1000.0</text>
    <text x="1228" y="352">Sash</text>
    <text x="1228" y="380">853.0</text>
    <text x="1228" y="392">Sash/Dlt</text>
    <text transform="translate(1053 615) rotate(-90)">2000.0</text>
    <text transform="translate(1065 614) rotate(-90)">Sash</text>
    <text transform="translate(1093 522) rotate(-90)">936.0</text>
    <text transform="translate(1106 522) rotate(-90)">Sash/Dlt</text>
    <text transform="translate(1093 717) rotate(-90)">757.0</text>
    <text transform="translate(1106 717) rotate(-90)">Sash/Dlt</text>
    <text className="hinge" x="1329" y="442">TopHinge</text>
    <text className="hinge" x="1329" y="624">CentreHinge</text>
    <text className="hinge" x="1329" y="805">BottomHinge</text>
    <text className="glass" x="1145" y="595">873.00 x 955.00</text>
    <text className="glass" x="1145" y="609">6.38 mm</text>
    <text className="glass" x="1145" y="773">873.00 x 776.00</text>
    <text className="glass" x="1145" y="787">6.38 mm</text>
    <path
      stroke="#3b3bfb"
      strokeWidth="1.200"
      d="M1261 602l40.500-52M1274.500 601.500l27-34M1288.500 602l12.500-16.500M1261 782l40-40.500M1274 782l27.500-27.500M1288.500 782l12.500-13"
    />
  </Cad>
);

const sparks = [[301, 729], [332, 729], [365, 729], [283, 765], [314, 765], [347, 765]];

const QuoteDrawing = () => (
  <Cad viewBox="211 669 238 175" role="img" aria-label="Stacking door elevation">
    <path d="M278.500 674v30M278.500 773v35M263 772.500h15M380 772.500h18" stroke="#777" strokeDasharray="2 1" />
    <path d="M280 705.500v65M377 705.500v65M278 706h101M278 771h101M344.500 706v65" stroke="#9a9a9a" strokeWidth="4" />
    <path d="M311.500 706v65" stroke="#888" />
    <path d="M312.500 706v65M268.500 750v5.500H388.500V750" stroke="#5c9e5c" />
    <path d="M290 696.500h-3.500v83h5" stroke="#7474fb" />
    <g fill="#3b3bfb" stroke="none">
      <path d="M310.500 702.500h3v3h-3zM342.500 702.500h3v3h-3zM310.500 771h3v3h-3zM342.500 771h3v3h-3zM290.500 694.500h2.500v3h-2.500zM290.500 776.500h2.500v3h-2.500z" />
      <path fill="#333c55" d="M277 703h2v2h-2zM378 703h2v2h-2zM277 772h2v2h-2zM378 772h2v2h-2z" />
    </g>
    <path d="M268 752l1.500-4 1.500 4M388.500 752l1.500-4 1.500 4" stroke="#5c9e5c" />
    {sparks.map(([x, y]) => (
      <path key={`${x}-${y}`} stroke="#5656fb" strokeWidth=".7" d={`M${x} ${y}l9-18M${x + 2} ${y - 7}l3-4M${x + 4} ${y - 6}l3-6M${x + 3} ${y - 9}l2-4`} />
    ))}
    <path d="M290.500 731.500h12v14h-12zM354.500 731.500h13v14h-13z" fill="#fff" stroke="#777" />
    <path d="M315 739l8-6v3.500h17v5h-17v3.500z" fill="#fff" stroke="#777" />
    <text x="296.500" y="743">F</text>
    <text x="361" y="743">F</text>
  </Cad>
);

/* ---------- data ---------- */

const menus = ["Business Objects", "Reports", "Resources", "Settings", "Pricing", "Database", "View", "Collaborate", "Help"];
const editorTabs = ["Details", "Options", "Behaviour", "Design", "Presentation", "BOM", "Notes", "Comp. Handling", "CadLink", "Calculations"];
const disabledTabs = ["Presentation", "Notes", "Comp. Handling"];
const drawTabs = ["Wireframes", "Resources", "Joints", "Tools", "Wizards", "Views"];
const props: [string, string][] = [
  ["AssyReceptorName", "GLAZING"],
  ["Name", "ADH1014 530"],
  ["Ixx", "23.361 cm4"],
  ["AutoSubstitute", "True"],
  ["Merged", "False"],
  ["Reverse", "True"],
  ["Length", "1000.00"],
  ["ShimSpacing", "0.00"],
];

export default function App() {
  return (
    <Shell>
      <Global />
      <TitleBar>
        <Logo />
        <TitleText>V6 ver 3.70.00.11978 -- DB V6-37-Main ver 21456 -- Quote 103 Calculated</TitleText>
        <TitleSaves>
          <IconButton aria-label="Save"><Floppy /></IconButton>
          <IconButton aria-label="Quick save"><Floppy bolt /></IconButton>
        </TitleSaves>
        <SelectLabel htmlFor="library">Select Library</SelectLabel>
        <PickWrap $w={210} $h={26}>
          <Pick id="library"><option>SoftTech Aluminium Library</option></Pick>
          <Caret />
        </PickWrap>
        <WindowButtons>
          <IconButton aria-label="Minimise"><G size={13}><path d="M0 12h12" strokeWidth="2" stroke="#b5dafb" /></G></IconButton>
          <IconButton aria-label="Restore"><G size={13}><path d="M.5 1.500h7v5h-7zM9 3.500h.5v5h-7v-1M11 5.500h.5v5h-7v-1" strokeWidth="1.200" /></G></IconButton>
          <IconButton aria-label="Close window"><Cross /></IconButton>
        </WindowButtons>
      </TitleBar>

      <MenuBar>
        <Brand type="button">V6</Brand>
        {menus.map((m) => (
          <MenuItem key={m} type="button" $on={m === "Reports"}>{m}</MenuItem>
        ))}
      </MenuBar>

      <Body>
        <Rail $w={162}>
          <RailHead $end><Twin left /></RailHead>
          <Grip $pad={10} />
          <NavList $gap={2}>
            {nav.map(([label, icon]) => (
              <NavItem key={label} type="button" $on={label === "Frames"}>
                <G>{icon}</G>
                <span>{label}</span>
                <Chev dir="right" />
              </NavItem>
            ))}
          </NavList>
        </Rail>

        <Rail $w={46}>
          <RailHead $end><Twin /></RailHead>
          <Grip />
          <NavList $gap={0}>
            {quick.map(([label, icon], i) => (
              <QuickItem key={label} type="button" aria-label={label} $on={i === 1}>
                <G>{icon}</G>
              </QuickItem>
            ))}
          </NavList>
        </Rail>

        <Main>
          <DocTabs>
            <DocTab $w={90}>Quotes<IconButton aria-label="Close Quotes"><Cross /></IconButton></DocTab>
            <DocTab $w={178} $on>Quote 103 - Calculated<IconButton aria-label="Close Quote 103"><Cross /></IconButton></DocTab>
            <DocTab $w={206}>Frame Editor ADJ_102_08BL<IconButton aria-label="Close Frame Editor"><Cross /></IconButton></DocTab>
          </DocTabs>

          <Work>
            <LeftCol>
              <ListBox>
                <ul>
                  <li><PanelTitle>Quote 103</PanelTitle></li>
                  <Tree shade icon={<Folder />} label="Items (11)" />
                  <Tree guides={["tick"]} icon={<DoorIcon />} no={1} label="3-Lite Stacking Door" size={12} gap={8} />
                  <Tree guides={["tick"]} on open icon={<LiteIcon />} no={2} label="2 Lite Sliding Door" size={12} gap={8} />
                  <Tree guides={["line", "tick"]} icon={<DoorIcon />} no={3} label="Grid Pattern 2" size={12} gap={8} />
                  <Tree guides={["line", "tick"]} icon={<DoorIcon />} no={4} label="4-Lite Sliding Door" size={12} gap={8} />
                  <Tree guides={["line", "last"]} icon={<DoorIcon />} no={5} label="2 Lite Sliding Door" size={12} gap={8} />
                  <Tree guides={["tick"]} icon={<DoorIcon />} no={6} label="Grid Pattern 2" size={12} gap={8} />
                  <Tree guides={["tick"]} icon={<DoorIcon />} no={7} label="Grid Pattern 2" size={12} gap={8} />
                  <Tree guides={["last"]} icon={<DoorIcon />} no={8} label="Grid Pattern 2" size={12} gap={8} />
                  {["Summary", "Job Details", "BOM", "Terms and Conditions", "Resource Overrides"].map((l) => (
                    <Tree key={l} icon={<Folder />} label={l} />
                  ))}
                </ul>
                <Bar>
                  <BarButton aria-label="Scroll up"><svg width="8" height="4"><path d="M0 4h8L4 0z" fill="#333" /></svg></BarButton>
                  <Track $n={40} />
                  <Thumb />
                  <Track $n={127} />
                  <BarButton aria-label="Scroll down"><svg width="8" height="4"><path d="M0 0h8L4 4z" fill="#333" /></svg></BarButton>
                </Bar>
              </ListBox>
              <MiniBar>
                <MiniButton aria-label="Expand"><G size={16}><path d="M2.500 14L14 2.500M3 2.500h11V14" /></G></MiniButton>
                <MiniButton aria-label="Collapse"><G size={16}><path d="M13.500 3L3 13.500M2.500 4v9.500H13" /></G></MiniButton>
                <MiniButton disabled aria-label="Move up"><G size={16}><path d="M8 16V1M1 8l7-7 7 7" /></G></MiniButton>
                <MiniButton disabled aria-label="Move down"><G size={16}><path d="M8 0v15M1 8l7 7 7-7" /></G></MiniButton>
                <MiniButton disabled aria-label="Copy"><G size={16}><path d="M4.500 12.500h-3v-12h7v3M5.500 3.500h6l3 3v9h-9zM11.500 3.500v3h3" /></G></MiniButton>
                <MiniButton disabled aria-label="Paste"><G size={16}><path d="M6.500 12.500h-5v-10h3v2h6v-2h2v3M4.500 2.500h2v-2h2v2h2M7.500 5.500h7v10h-7z" /></G></MiniButton>
                <MiniButton disabled aria-label="Remove item"><Cross size={16} /></MiniButton>
              </MiniBar>
              <Preview>
                <h3>Quote 103</h3>
                <QuoteDrawing />
              </Preview>
            </LeftCol>

            <Editor>
              <Crumbs aria-label="Breadcrumb">
                <a href="#items">Quote Items List</a>
                <span>/</span>
                <a href="#parent">Parent Frame Name</a>
                <span>/</span>
                <b>Frame Name</b>
              </Crumbs>
              <TabRow $h={40}>
                {editorTabs.map((t) => (
                  <Tab key={t} type="button" $on={t === "Design"} disabled={disabledTabs.includes(t)}>{t}</Tab>
                ))}
              </TabRow>
              <Columns>
                <FrameCol>
                  <ObjectsRow>
                    <label htmlFor="objects">Display Objects</label>
                    <PickWrap $w={128} $h={24}>
                      <Pick id="objects"><option>Default</option></Pick>
                      <Caret />
                    </PickWrap>
                  </ObjectsRow>
                  <FrameBox>
                    <h3>Frame AHDLHOM</h3>
                    <ul>
                      <Tree icon={<Grid4 />} label="Face 1" size={13} />
                      <Tree guides={["tick"]} icon={<BagIcon />} label="CW INTEK SEAL 20" size={13} gap={9} />
                      <Tree guides={["tick"]} on icon={<BagIcon />} label="Glazing 44" size={13} gap={9} />
                      <Tree guides={["tick"]} icon={<FolderWide />} label="Points" size={13} gap={9} />
                      <Tree guides={["tick"]} icon={<FolderWide />} label="Lines" size={13} gap={9} />
                      <Tree guides={["tick"]} open icon={<FolderWide open />} label="Assemblies" size={13} gap={9} />
                      <Tree guides={["line", "tick"]} icon={<RailIcon />} label="CW RAIL 23" size={13} gap={9} />
                      <Tree guides={["line", "tick"]} icon={<RailIcon />} label="CW SITE 26" size={13} gap={9} />
                      <Tree guides={["line", "tick"]} icon={<RailIcon />} label="CW RAIL 29" size={13} gap={9} />
                      <Tree guides={["line", "last"]} icon={<RailIcon />} label="CW STILE 32" size={13} gap={9} />
                      <Tree guides={["tick"]} icon={<FolderWide open />} label="Lights" size={13} gap={9} />
                      <Tree guides={["line", "none"]} icon={<LightIcon />} label="Light 10" size={13} gap={9} />
                    </ul>
                  </FrameBox>
                  <PropTitle>Properties</PropTitle>
                  <PropTable>
                    <tbody>
                      <tr>
                        <th scope="row"><label htmlFor="code">Assembly Code</label></th>
                        <td><CodeInput id="code" defaultValue="ADH1014" /></td>
                      </tr>
                      {props.map(([k, v]) => (
                        <tr key={k}>
                          <th scope="row">{k}</th>
                          <td>{v}</td>
                        </tr>
                      ))}
                    </tbody>
                  </PropTable>
                </FrameCol>

                <DrawCol>
                  <TabRow $h={53}>
                    {drawTabs.map((t) => (
                      <Tab key={t} type="button" $on={t === "Tools"}>{t}</Tab>
                    ))}
                  </TabRow>
                  <Board>
                    <ToolBar>
                      {tools.map(([label, icon, off], i) => (
                        <Tool key={label} type="button" aria-label={label} disabled={off} $on={i === 2}>
                          <G size={28}>{icon}</G>
                        </Tool>
                      ))}
                    </ToolBar>
                    <ToolBar $side>
                      {sideTools.map(([label, icon, off], i) => (
                        <Tool key={label} type="button" aria-label={label} disabled={off} $on={i === 0}>
                          <G size={28}>{icon}</G>
                        </Tool>
                      ))}
                    </ToolBar>
                    <Sheet><DoorDrawing /></Sheet>
                  </Board>
                  <StateBar>
                    {["FACE", "ADH1014 530", "Drawing Board Outside View", "Visible: All - Current:[Default]", "-459.00", "218.50"].map((s) => (
                      <span key={s}>{s}</span>
                    ))}
                  </StateBar>
                </DrawCol>
              </Columns>
            </Editor>
          </Work>

          <Footer>
            <Action type="button">Update Prices</Action>
            <Action type="button">Create Order</Action>
            <Action type="button">Alternative</Action>
            <Action type="button">Print</Action>
            <Spacer />
            <Action type="button" $main>Save/Close</Action>
            <Action type="button" $main>Save Items Only</Action>
            <Action type="button" $main>Cancel</Action>
            <Action type="button" $main>Help</Action>
          </Footer>
        </Main>

        <Rail $w={220}>
          <RailHead><Twin /></RailHead>
          <Options>
            <OptionTitle>Quote Options</OptionTitle>
            <OptionHead type="button" $on>Add Frame<Chev dir="up" /></OptionHead>
            <OptionItem type="button">
              <G size={16}><path d="M2.500.5h11v15h-11zM8 4.500h4M8 8.500h4M8 12.500h4M4 4l1 1 2-2M4 8l1 1 2-2M4 12l1 1 2-2" /></G>
              Pick Frame
            </OptionItem>
            <OptionItem type="button">
              <G size={16}><path d="M.5 3.500h15v10H.5zM7.500 3.500v10M11.500 3.500v10M7.500 8.500h8" /></G>
              Create New Frame
            </OptionItem>
            <OptionItem type="button">
              <G size={16}><path d="M.5 8.500h7v7h-7zM4.500 8.500v-4h7v7h-4M8.500 4.500v-4h7v7h-4" /></G>
              Quick Frame
            </OptionItem>
            {["Add Other items", "Gears", "E-Marks", "Print", "Shop Drawings"].map((o) => (
              <OptionHead key={o} type="button">{o}<Chev dir="down" /></OptionHead>
            ))}
          </Options>
        </Rail>
      </Body>

      <AppStatus><span>Admin</span></AppStatus>
    </Shell>
  );
}
